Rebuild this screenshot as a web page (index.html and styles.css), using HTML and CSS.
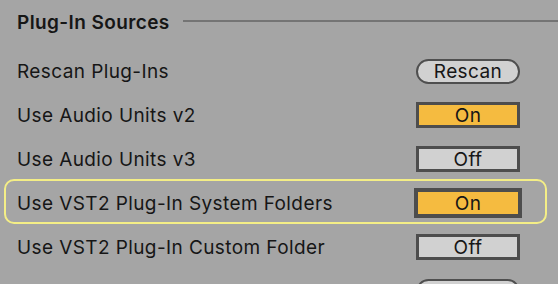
FILE: index.html
```html
<!DOCTYPE html>
<html>
<head>
<meta charset="utf-8">
<title>Plug-In Sources</title>
<link rel="stylesheet" href="styles.css">
</head>
<body>
<div class="prefs">
	<div class="sec-hd">
		<h3 class="sec-title">Plug-In Sources</h3>
		<span class="sec-line"></span>
	</div>
	<div class="rows">
		<div class="row">
			<span class="label">Rescan Plug-Ins</span>
			<button class="pill">Rescan</button>
		</div>
		<div class="row">
			<span class="label">Use Audio Units v2</span>
			<button class="toggle toggle-on">On</button>
		</div>
		<div class="row">
			<span class="label">Use Audio Units v3</span>
			<button class="toggle">Off</button>
		</div>
		<div class="row row-focus">
			<span class="label">Use VST2 Plug-In System Folders</span>
			<button class="toggle toggle-on toggle-focus">On</button>
		</div>
		<div class="row">
			<span class="label">Use VST2 Plug-In Custom Folder</span>
			<button class="toggle">Off</button>
		</div>
		<div class="row">
			<span class="label">VST2 Plug-In Custom Folder</span>
			<button class="pill">Browse</button>
		</div>
	</div>
</div>
</body>
</html>
```

FILE: styles.css
```css
*,*:before,*:after{
	padding: 0;
	margin: 0;
	box-sizing: border-box;
}
html,body{
	background-color: #a5a5a5;
	overflow: hidden;
}
body{
	font-family: Inter, "Noto Sans", sans-serif;
	font-size: 19px;
	letter-spacing: 0.4px;
	color: #161616;
}
.prefs{
	width: 558px;
}
.sec-hd{
	display: flex;
	align-items: center;
	height: 44px;
	padding-left: 17px;
	gap: 13px;
}
.sec-title{
	font-size: 19px;
	font-weight: 600;
	white-space: nowrap;
}
.sec-line{
	flex: 1;
	height: 2px;
	background-color: #747474;
	margin-top: -2px;
}
.rows{
	padding-top: 5px;
}
.row{
	position: relative;
	display: flex;
	align-items: center;
	justify-content: space-between;
	height: 44px;
	padding: 0 38px 0 17px;
}
.row-focus:before{
	content: "";
	position: absolute;
	left: 4px;
	right: 11px;
	top: -2px;
	bottom: 1px;
	border: 2px solid #f4ee86;
	border-radius: 10px;
}
.label{
	white-space: nowrap;
}
.pill{
	width: 104px;
	height: 25px;
	border: 2px solid #4f4f4f;
	border-radius: 13px;
	background-color: #d1d1d1;
	font-family: inherit;
	font-size: 19px;
	letter-spacing: 0.4px;
	color: #161616;
	line-height: 1;
}
.toggle{
	width: 104px;
	height: 26px;
	border: 3px solid #4d4d4d;
	background-color: #d1d1d1;
	font-family: inherit;
	font-size: 19px;
	letter-spacing: 0.4px;
	color: #161616;
	line-height: 1;
}
.toggle-on{
	background-color: #f5bb40;
}
.toggle-focus{
	width: 108px;
	height: 30px;
	border-width: 4px;
	margin-right: -2px;
}
```
